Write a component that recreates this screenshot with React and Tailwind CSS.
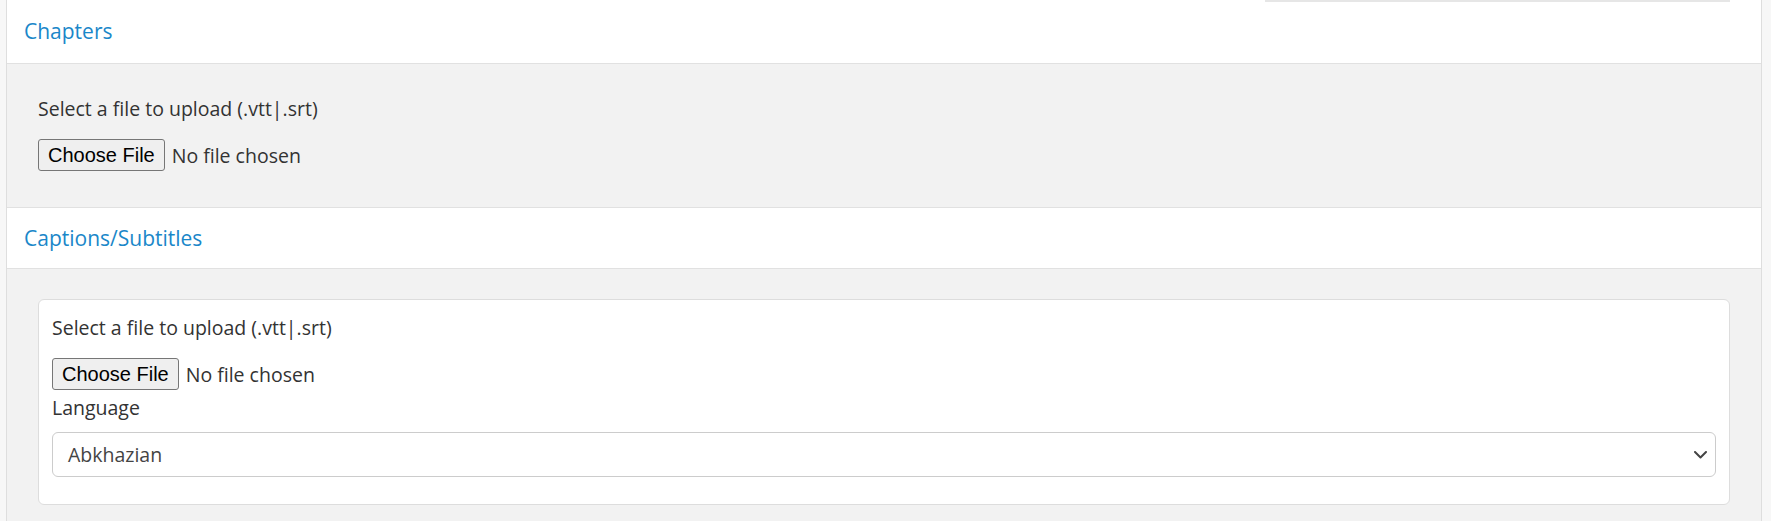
import { useState } from 'react';

const FileRow = () => (
  <div className="flex items-center mt-[16px]">
    <button className="h-[32px] px-[9px] bg-[#efefef] border border-[#767676] rounded-[3px] text-[20px] leading-none text-black font-['Liberation_Sans',Arial,sans-serif]">
      Choose File
    </button>
    <span className="ml-[7px] text-[19.5px] leading-[29px] text-[#333]">No file chosen</span>
  </div>
);

const SectionHeader = ({ title, first }) => (
  <div
    className={`relative flex items-center bg-white pl-[17px] border-b border-[#e1e1e1] ${
      first ? 'h-[64px]' : 'h-[62px] border-t'
    }`}
  >
    {first && <div className="absolute top-0 left-[1258px] w-[465px] h-[2px] bg-[#e6e6e6]" />}
    <h3 className="text-[21px] leading-[31px] text-[#1a87c9]">{title}</h3>
  </div>
);

export default function App() {
  const [language, setLanguage] = useState('Abkhazian');

  return (
    <div className="w-[1771px] h-[521px] overflow-hidden bg-[#f7f7f7] font-['Open_Sans',sans-serif]">
      <div className="ml-[6px] w-[1756px] h-full bg-[#f2f2f2] border-l border-r border-[#dedede]">
        <SectionHeader title="Chapters" first />
        <div className="pt-[30px] pb-[36px] pl-[31px]">
          <p className="text-[19.5px] leading-[29px] text-[#333]">Select a file to upload (.vtt|.srt)</p>
          <FileRow />
        </div>

        <SectionHeader title="Captions/Subtitles" />
        <div className="pt-[30px] px-[31px]">
          <div className="bg-white border border-[#dddddd] rounded-[6px] pt-[13px] px-[13px] pb-[27px]">
            <p className="text-[19.5px] leading-[29px] text-[#333]">Select a file to upload (.vtt|.srt)</p>
            <FileRow />
            <label className="block mt-[3px] text-[19.5px] leading-[29px] text-[#333]">Language</label>
            <div
              className="mt-[10px] h-[45px] flex items-center justify-between pl-[15px] pr-[8px] border border-[#cccccc] rounded-[6px] bg-white"
              onClick={() => setLanguage(language)}
            >
              <span className="text-[19.5px] text-[#444]">{language}</span>
              <svg width="13" height="8" viewBox="0 0 13 8" fill="none">
                <path d="M1 1l5.5 5.5L12 1" stroke="#444" strokeWidth="2" strokeLinecap="round" strokeLinejoin="round" />
              </svg>
            </div>
          </div>
        </div>
      </div>
    </div>
  );
}
